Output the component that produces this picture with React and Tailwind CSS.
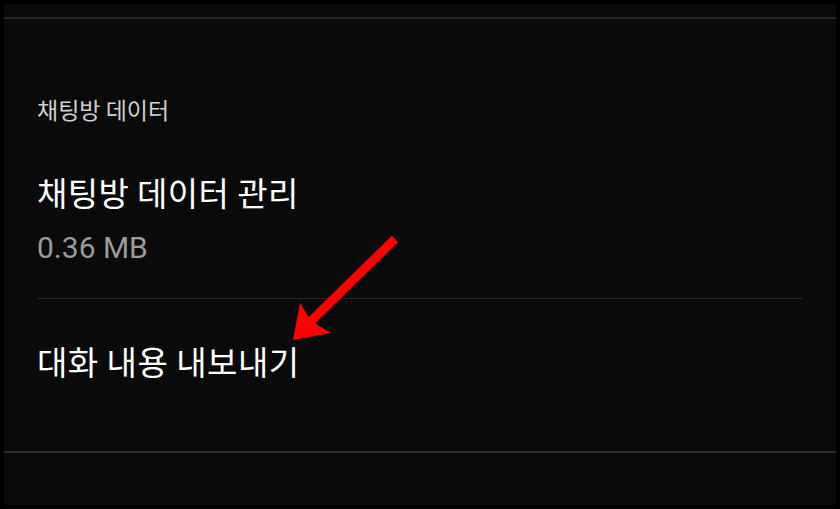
const KR = { fontFamily: '"Noto Sans CJK KR", "Noto Sans", sans-serif' }
const NUM = { fontFamily: 'Roboto, "Noto Sans CJK KR", sans-serif' }

function Arrow() {
  return (
    <svg className="absolute left-0 top-0 pointer-events-none" width="840" height="509" viewBox="0 0 840 509">
      <line x1="395" y1="239" x2="309" y2="323" stroke="#ff0000" strokeWidth="9" />
      <polygon points="293,340 300,303 311,321 331,333" fill="#ff0000" />
    </svg>
  )
}

export default function App() {
  return (
    <div className="relative w-[840px] h-[509px] bg-black p-[4px]">
      <div className="flex flex-col h-full bg-[#0a0a0a]">
        <div className="h-[13px]" />
        <div className="h-[2px] bg-[#262626]" />

        <div className="px-[33px] pt-[75px]" style={KR}>
          <p className="text-[23px] leading-[30px] text-[#cfcfcf]">채팅방 데이터</p>
        </div>

        <div className="px-[33px] pt-[48px]">
          <p className="text-[33px] leading-[40px] text-white tracking-[0.4px]" style={KR}>채팅방 데이터 관리</p>
          <p className="mt-[18px] text-[30px] leading-[36px] text-[#9b9b9b]" style={NUM}>0.36 MB</p>
        </div>

        <div className="mx-[33px] mt-[32px] h-px bg-[#262626]" />

        <div className="px-[33px] pt-[42px]">
          <p className="text-[33px] leading-[40px] text-white tracking-[0.5px]" style={KR}>대화 내용 내보내기</p>
        </div>

        <div className="mt-auto mb-[52px] h-[2px] bg-[#2c2c2c]" />
      </div>
      <Arrow />
    </div>
  )
}
